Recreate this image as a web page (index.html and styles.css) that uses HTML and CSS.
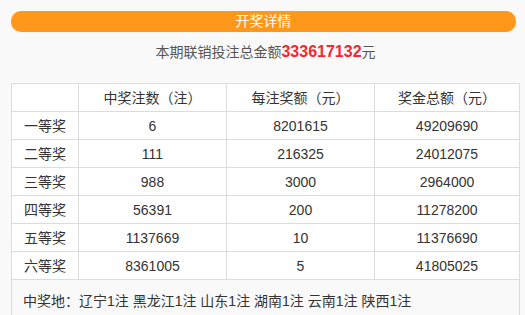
FILE: index.html
```html
<!DOCTYPE html>
<html lang="zh-CN">
<head>
<meta charset="utf-8">
<title>开奖详情</title>
<link rel="stylesheet" href="styles.css">
</head>
<body>
<div class="page">
  <div class="title-bar">开奖详情</div>
  <div class="summary">本期联销投注总金额<span class="amount">333617132</span>元</div>
  <table class="prize-table">
    <tr class="head">
      <td class="c1"></td>
      <td class="c2">中奖注数（注）</td>
      <td class="c3">每注奖额（元）</td>
      <td class="c4">奖金总额（元）</td>
    </tr>
    <tr><td>一等奖</td><td>6</td><td>8201615</td><td>49209690</td></tr>
    <tr><td>二等奖</td><td>111</td><td>216325</td><td>24012075</td></tr>
    <tr><td>三等奖</td><td>988</td><td>3000</td><td>2964000</td></tr>
    <tr><td>四等奖</td><td>56391</td><td>200</td><td>11278200</td></tr>
    <tr><td>五等奖</td><td>1137669</td><td>10</td><td>11376690</td></tr>
    <tr><td>六等奖</td><td>8361005</td><td>5</td><td>41805025</td></tr>
    <tr class="foot"><td colspan="4">中奖地：辽宁1注 黑龙江1注 山东1注 湖南1注 云南1注 陕西1注</td></tr>
  </table>
</div>
</body>
</html>
```
FILE: styles.css
```css
html, body {
  margin: 0;
  padding: 0;
  background: #f9f9f9;
}
body {
  font-family: "Liberation Sans", "Noto Sans CJK SC", sans-serif;
  font-size: 14px;
  color: #333;
}
.page {
  padding: 11px 0 0 11px;
  width: 509px;
}
.title-bar {
  width: 505px;
  height: 21px;
  line-height: 21px;
  border-radius: 10px;
  background: #ff981a;
  color: #fff;
  text-align: center;
  font-size: 14px;
}
.summary {
  margin-top: 10px;
  height: 20px;
  line-height: 20px;
  text-align: center;
  color: #555;
  font-size: 14px;
}
.amount {
  color: #f7262f;
  font-weight: bold;
  font-size: 16px;
}
.prize-table {
  margin-top: 21px;
  width: 509px;
  border-collapse: collapse;
  background: #fff;
  table-layout: fixed;
}
.prize-table td {
  border: 1px solid #dcdcdc;
  height: 27px;
  padding: 0;
  text-align: center;
  line-height: 20px;
  color: #333;
}
.c1 { width: 66px; }
.c2 { width: 147px; }
.c3 { width: 147px; }
.prize-table .foot td {
  background: #f9f9f9;
  text-align: left;
  padding-left: 11px;
  height: 42px;
}
```
